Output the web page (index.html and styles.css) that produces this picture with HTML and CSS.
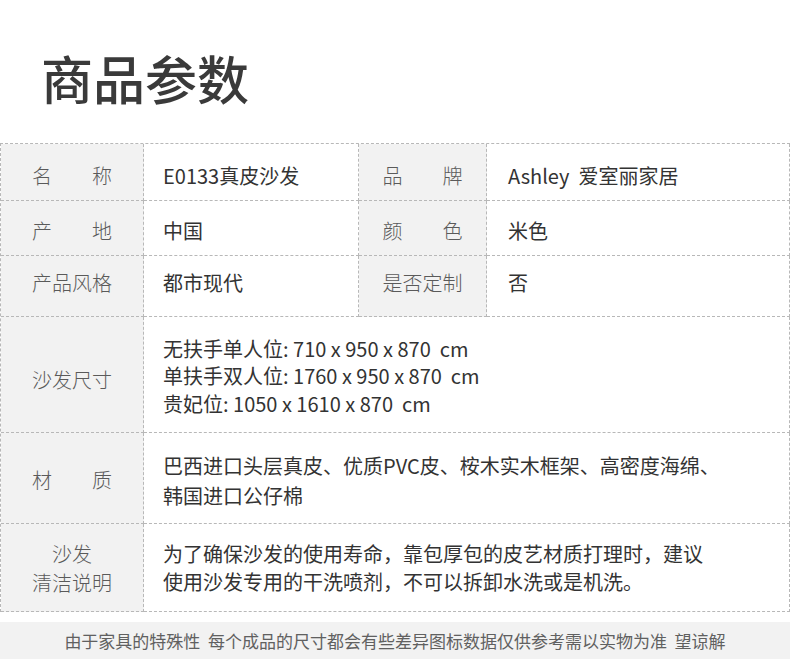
FILE: index.html
```html
<!DOCTYPE html>
<html lang="zh-CN">
<head>
<meta charset="utf-8">
<title>商品参数</title>
<link rel="stylesheet" href="styles.css">
</head>
<body>
<div class="page">
  <h1 class="title">商品参数</h1>
  <div class="specs">
    <div class="label r1"><span class="spread"><span>名</span><span>称</span></span></div>
    <div class="value r1 col2">E0133真皮沙发</div>
    <div class="label r1"><span class="spread"><span>品</span><span>牌</span></span></div>
    <div class="value r1 col4">Ashley&nbsp; 爱室丽家居</div>

    <div class="label r2"><span class="spread"><span>产</span><span>地</span></span></div>
    <div class="value r2 col2">中国</div>
    <div class="label r2"><span class="spread"><span>颜</span><span>色</span></span></div>
    <div class="value r2 col4">米色</div>

    <div class="label r3">产品风格</div>
    <div class="value r3 col2">都市现代</div>
    <div class="label r3">是否定制</div>
    <div class="value r3 col4">否</div>

    <div class="label r4 r4l">沙发尺寸</div>
    <div class="value r4 wide multi dims">
      <div>无扶手单人位: 710 x 950 x 870&nbsp; cm</div>
      <div>单扶手双人位: 1760 x 950 x 870&nbsp; cm</div>
      <div>贵妃位: 1050 x 1610 x 870&nbsp; cm</div>
    </div>

    <div class="label r5 r5l"><span class="spread"><span>材</span><span>质</span></span></div>
    <div class="value r5 wide multi mat">
      <div>巴西进口头层真皮、优质PVC皮、桉木实木框架、高密度海绵、</div>
      <div>韩国进口公仔棉</div>
    </div>

    <div class="label r6 stack">
      <div>沙发</div>
      <div>清洁说明</div>
    </div>
    <div class="value r6 wide multi care">
      <div>为了确保沙发的使用寿命，靠包厚包的皮艺材质打理时，建议</div>
      <div>使用沙发专用的干洗喷剂，不可以拆卸水洗或是机洗。</div>
    </div>
  </div>
  <div class="note">由于家具的特殊性&nbsp; 每个成品的尺寸都会有些差异图标数据仅供参考需以实物为准&nbsp; 望谅解</div>
</div>
</body>
</html>
```

FILE: styles.css
```css
html, body {
  margin: 0;
  padding: 0;
  background: #ffffff;
}

.page {
  width: 790px;
  font-family: "Noto Sans CJK SC", "Noto Sans", sans-serif;
  color: #333333;
}

.title {
  margin: 0;
  box-sizing: border-box;
  height: 143px;
  padding: 52px 0 0 41px;
  font-size: 52px;
  line-height: 52px;
  font-weight: 500;
  color: #3a3a3a;
  letter-spacing: 0;
}

.specs {
  display: grid;
  grid-template-columns: 143px 215px 128px 303px;
  grid-template-rows: 57px 55px 61px 116px 91px 88px;
  border-top: 1px dashed #b8b8b8;
  border-left: 1px dashed #b8b8b8;
}

.label,
.value {
  box-sizing: border-box;
  border-right: 1px dashed #b8b8b8;
  border-bottom: 1px dashed #b8b8b8;
  display: flex;
  align-items: center;
  font-size: 20px;
  line-height: 28px;
}

.label {
  background: #f2f2f2;
  color: #5a5a5a;
  justify-content: center;
  font-weight: 300;
}

.value {
  color: #333333;
}

.col2 {
  padding-left: 19px;
}

.col4 {
  padding-left: 21px;
}

.wide {
  grid-column: span 3;
  padding-left: 19px;
}

.multi {
  flex-direction: column;
  align-items: flex-start;
  justify-content: center;
}

.spread {
  display: flex;
  justify-content: space-between;
  width: 80px;
}

.r1 { padding-top: 8px; }
.r2 { padding-top: 5px; }
.r3 { padding-bottom: 7px; }

.r4l { padding-top: 11px; }
.dims {
  padding-top: 3px;
  line-height: 27.5px;
  white-space: nowrap;
}

.r5l { padding-top: 3px; }
.mat {
  padding-top: 6px;
  line-height: 30px;
}

.stack {
  flex-direction: column;
  justify-content: center;
  line-height: 29px;
  text-align: center;
}

.care {
  line-height: 28.5px;
  padding-top: 1px;
}

.note {
  margin-top: 10px;
  height: 37px;
  background: #f2f2f2;
  color: #606060;
  font-size: 17px;
  line-height: 37px;
  text-align: center;
  font-weight: 400;
}
```
